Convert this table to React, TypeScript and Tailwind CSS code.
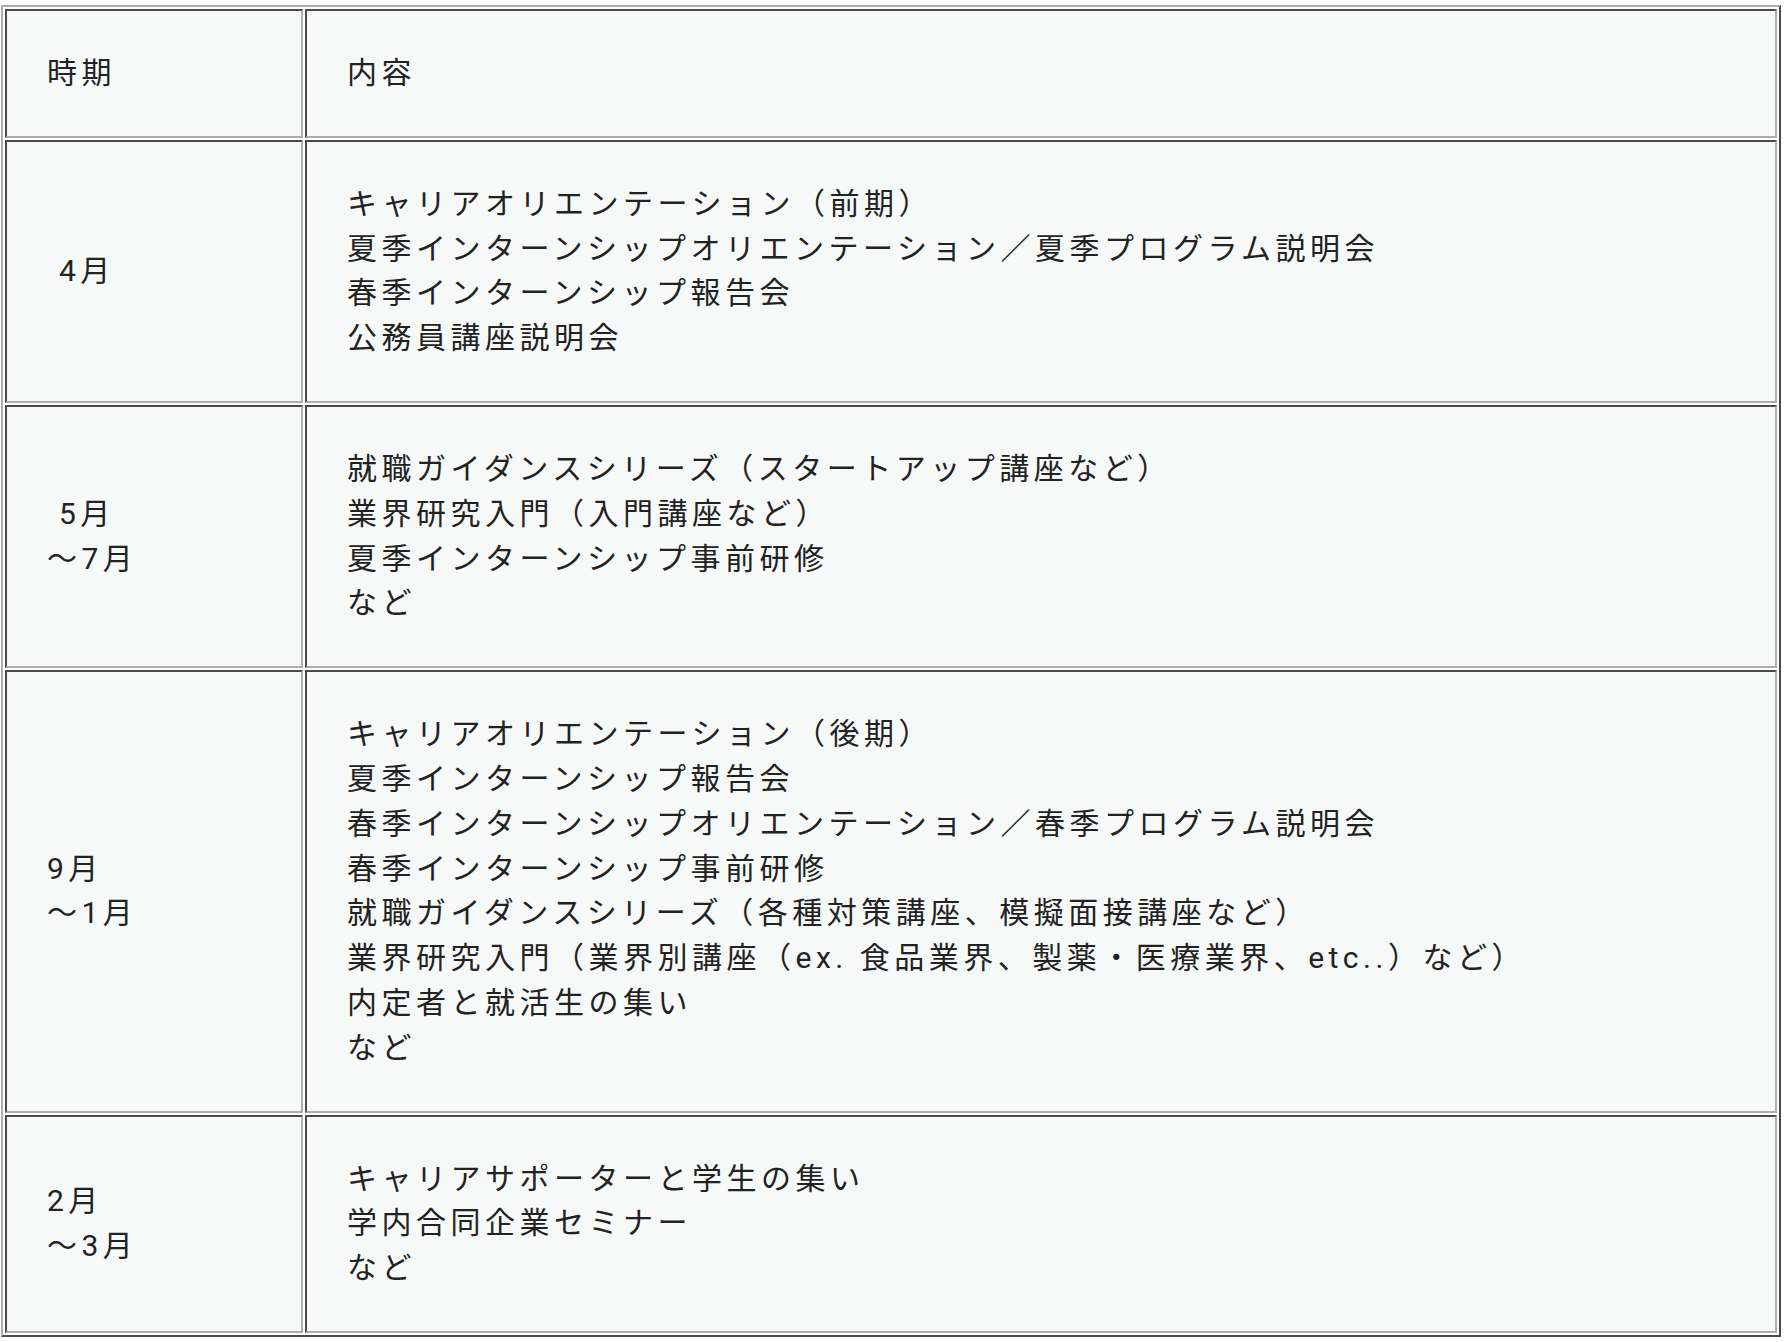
const rows: { period: string[]; items: string[] }[] = [
  {
    period: ["\u00a04月"],
    items: [
      "キャリアオリエンテーション（前期）",
      "夏季インターンシップオリエンテーション／夏季プログラム説明会",
      "春季インターンシップ報告会",
      "公務員講座説明会",
    ],
  },
  {
    period: ["\u00a05月", "～7月"],
    items: [
      "就職ガイダンスシリーズ（スタートアップ講座など）",
      "業界研究入門（入門講座など）",
      "夏季インターンシップ事前研修",
      "など",
    ],
  },
  {
    period: ["9月", "～1月"],
    items: [
      "キャリアオリエンテーション（後期）",
      "夏季インターンシップ報告会",
      "春季インターンシップオリエンテーション／春季プログラム説明会",
      "春季インターンシップ事前研修",
      "就職ガイダンスシリーズ（各種対策講座、模擬面接講座など）",
      "業界研究入門（業界別講座（ex. 食品業界、製薬・医療業界、etc..）など）",
      "内定者と就活生の集い",
      "など",
    ],
  },
  {
    period: ["2月", "～3月"],
    items: ["キャリアサポーターと学生の集い", "学内合同企業セミナー", "など"],
  },
];

const cell =
  "border-2 border-t-[#4a4a4a] border-l-[#4a4a4a] border-r-[#adadad] border-b-[#adadad] bg-[#f7f9f9] p-10 text-left align-middle font-normal";

export default function App() {
  return (
    <div className="bg-white min-h-screen pt-[5px] pl-[1px]">
      <table
        className="w-[1780px] table-fixed border-separate border-spacing-[2px] border-2 border-t-[#adadad] border-l-[#adadad] border-r-[#4a4a4a] border-b-[#4a4a4a] text-[30px] leading-[44.8px] tracking-[0.15em] text-[#222]"
        style={{ fontFamily: 'Roboto, "Noto Sans CJK JP", sans-serif' }}
      >
        <thead>
          <tr>
            <th className={`${cell} w-[298px]`}>時期</th>
            <th className={cell}>内容</th>
          </tr>
        </thead>
        <tbody>
          {rows.map((r, i) => (
            <tr key={i}>
              <td className={cell}>
                {r.period.map((p, j) => (
                  <div key={j}>{p}</div>
                ))}
              </td>
              <td className={cell}>
                {r.items.map((t, j) => (
                  <div key={j}>{t}</div>
                ))}
              </td>
            </tr>
          ))}
        </tbody>
      </table>
    </div>
  );
}
